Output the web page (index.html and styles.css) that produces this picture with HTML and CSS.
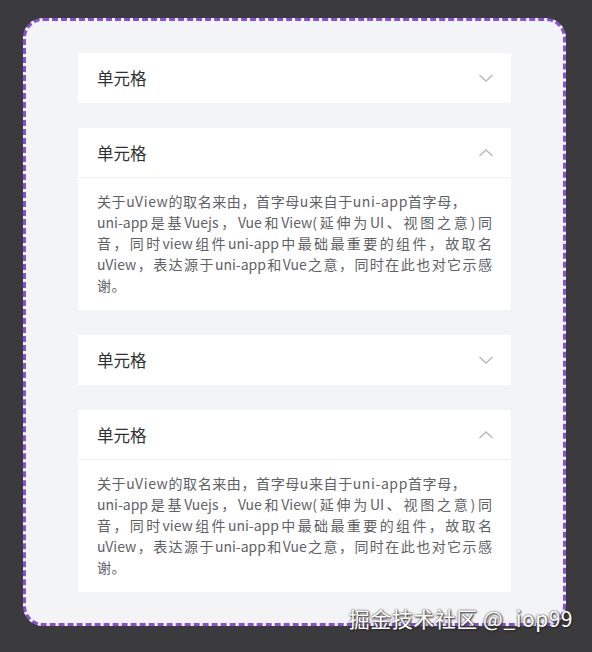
FILE: index.html
```html
<!DOCTYPE html>
<html lang="zh-CN">
<head>
<meta charset="utf-8">
<link rel="stylesheet" href="styles.css">
</head>
<body>
<div class="frame">
  <div class="panel">
    <div class="item">
      <div class="head">
        <span class="title">单元格</span>
        <svg class="arrow" width="16" height="10" viewBox="0 0 16 10"><polyline points="1.5,2 8,8 14.5,2" fill="none" stroke="#b4b7bd" stroke-width="1.3"/></svg>
      </div>
    </div>
    <div class="item">
      <div class="head open">
        <span class="title">单元格</span>
        <svg class="arrow" width="16" height="10" viewBox="0 0 16 10"><polyline points="1.5,8 8,2 14.5,8" fill="none" stroke="#b4b7bd" stroke-width="1.3"/></svg>
      </div>
      <div class="body">
        <span class="line">关于uView的取名来由，首字母u来自于uni-app首字母，</span>
        <span class="line full">uni-app是基Vuejs，Vue和View(延伸为UI、视图之意)同</span>
        <span class="line full">音，同时view组件uni-app中最础最重要的组件，故取名</span>
        <span class="line full">uView，表达源于uni-app和Vue之意，同时在此也对它示感</span>
        <span class="line">谢。</span>
      </div>
    </div>
    <div class="item">
      <div class="head">
        <span class="title">单元格</span>
        <svg class="arrow" width="16" height="10" viewBox="0 0 16 10"><polyline points="1.5,2 8,8 14.5,2" fill="none" stroke="#b4b7bd" stroke-width="1.3"/></svg>
      </div>
    </div>
    <div class="item">
      <div class="head open">
        <span class="title">单元格</span>
        <svg class="arrow" width="16" height="10" viewBox="0 0 16 10"><polyline points="1.5,8 8,2 14.5,8" fill="none" stroke="#b4b7bd" stroke-width="1.3"/></svg>
      </div>
      <div class="body">
        <span class="line">关于uView的取名来由，首字母u来自于uni-app首字母，</span>
        <span class="line full">uni-app是基Vuejs，Vue和View(延伸为UI、视图之意)同</span>
        <span class="line full">音，同时view组件uni-app中最础最重要的组件，故取名</span>
        <span class="line full">uView，表达源于uni-app和Vue之意，同时在此也对它示感</span>
        <span class="line">谢。</span>
      </div>
    </div>
  </div>
  <div class="watermark">掘金技术社区 @_iop99</div>
</div>
</body>
</html>
```

FILE: styles.css
```css
html, body {
  margin: 0;
  padding: 0;
  background: #3b3b3d;
}
body {
  width: 592px;
  height: 652px;
  overflow: hidden;
  font-family: "Noto Sans CJK SC", "Noto Sans", sans-serif;
}
.frame {
  position: relative;
  padding: 18px 26px 0 23px;
}
.panel {
  background: #f3f4f6;
  border: 3px dashed #8a4fd8;
  border-radius: 20px;
  padding: 32px 52px 31px;
  display: flex;
  flex-direction: column;
  gap: 25px;
}
.item {
  background: #ffffff;
}
.head {
  height: 50px;
  display: flex;
  align-items: center;
  justify-content: space-between;
  padding: 0 17px 0 19px;
  box-sizing: border-box;
}
.head.open {
  border-bottom: 1px solid #f0f1f3;
}
.title {
  font-size: 16.5px;
  color: #303133;
}
.arrow {
  display: block;
}
.body {
  padding: 13px 19px 14px;
  font-size: 14px;
  line-height: 21px;
  color: #606266;
}
.line {
  display: block;
  white-space: nowrap;
  letter-spacing: 0.6px;
}
.line.full {
  white-space: normal;
  text-align: justify;
  text-align-last: justify;
  text-justify: inter-character;
  letter-spacing: 0;
}
.watermark {
  position: absolute;
  right: 19px;
  top: 603px;
  font-size: 21px;
  color: #ffffff;
  letter-spacing: 0.5px;
  text-shadow: 0 0 2px #333, 1px 1px 2px #222;
}
```
